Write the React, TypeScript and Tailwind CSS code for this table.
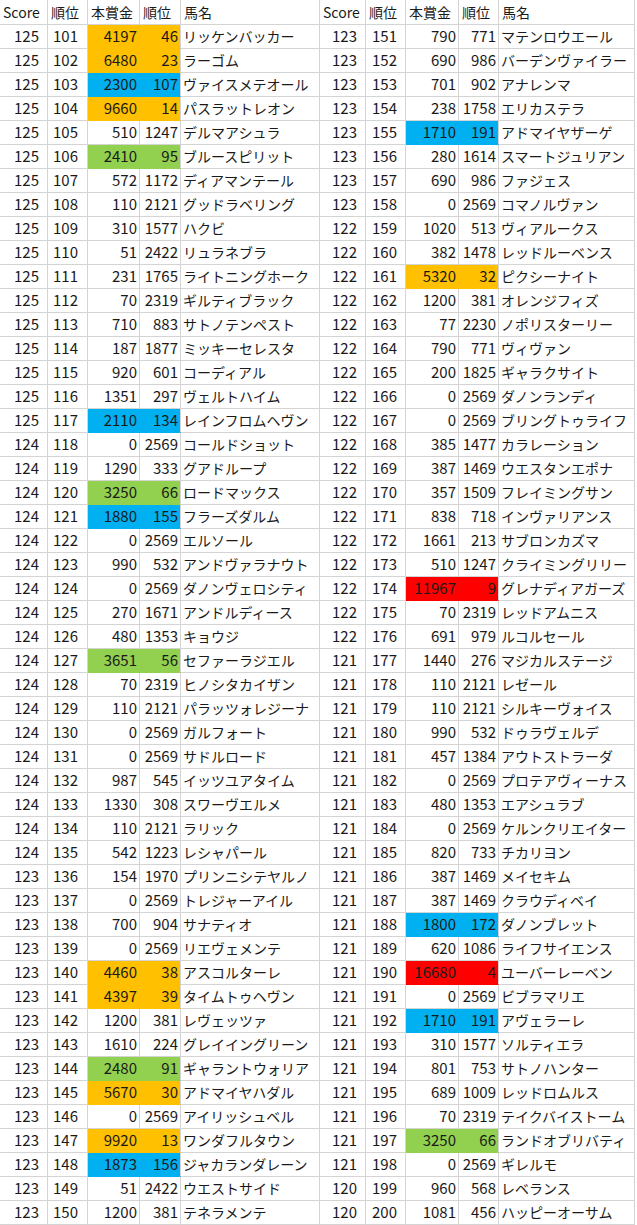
import React from "react";

type Row = [number, number, number, number, string, string?];

const O = "o", B = "b", G = "g", R = "r";

const left: Row[] = [
  [125, 101, 4197, 46, "リッケンバッカー", O],
  [125, 102, 6480, 23, "ラーゴム", O],
  [125, 103, 2300, 107, "ヴァイスメテオール", B],
  [125, 104, 9660, 14, "パスラットレオン", O],
  [125, 105, 510, 1247, "デルマアシュラ"],
  [125, 106, 2410, 95, "ブルースピリット", G],
  [125, 107, 572, 1172, "ディアマンテール"],
  [125, 108, 110, 2121, "グッドラベリング"],
  [125, 109, 310, 1577, "ハクビ"],
  [125, 110, 51, 2422, "リュラネブラ"],
  [125, 111, 231, 1765, "ライトニングホーク"],
  [125, 112, 70, 2319, "ギルティブラック"],
  [125, 113, 710, 883, "サトノテンペスト"],
  [125, 114, 187, 1877, "ミッキーセレスタ"],
  [125, 115, 920, 601, "コーディアル"],
  [125, 116, 1351, 297, "ヴェルトハイム"],
  [125, 117, 2110, 134, "レインフロムヘヴン", B],
  [124, 118, 0, 2569, "コールドショット"],
  [124, 119, 1290, 333, "グアドループ"],
  [124, 120, 3250, 66, "ロードマックス", G],
  [124, 121, 1880, 155, "フラーズダルム", B],
  [124, 122, 0, 2569, "エルソール"],
  [124, 123, 990, 532, "アンドヴァラナウト"],
  [124, 124, 0, 2569, "ダノンヴェロシティ"],
  [124, 125, 270, 1671, "アンドルディース"],
  [124, 126, 480, 1353, "キョウジ"],
  [124, 127, 3651, 56, "セファーラジエル", G],
  [124, 128, 70, 2319, "ヒノシタカイザン"],
  [124, 129, 110, 2121, "パラッツォレジーナ"],
  [124, 130, 0, 2569, "ガルフォート"],
  [124, 131, 0, 2569, "サドルロード"],
  [124, 132, 987, 545, "イッツユアタイム"],
  [124, 133, 1330, 308, "スワーヴエルメ"],
  [124, 134, 110, 2121, "ラリック"],
  [124, 135, 542, 1223, "レシャパール"],
  [123, 136, 154, 1970, "プリンニシテヤルノ"],
  [123, 137, 0, 2569, "トレジャーアイル"],
  [123, 138, 700, 904, "サナティオ"],
  [123, 139, 0, 2569, "リエヴェメンテ"],
  [123, 140, 4460, 38, "アスコルターレ", O],
  [123, 141, 4397, 39, "タイムトゥヘヴン", O],
  [123, 142, 1200, 381, "レヴェッツァ"],
  [123, 143, 1610, 224, "グレイイングリーン"],
  [123, 144, 2480, 91, "ギャラントウォリア", G],
  [123, 145, 5670, 30, "アドマイヤハダル", O],
  [123, 146, 0, 2569, "アイリッシュベル"],
  [123, 147, 9920, 13, "ワンダフルタウン", O],
  [123, 148, 1873, 156, "ジャカランダレーン", B],
  [123, 149, 51, 2422, "ウエストサイド"],
  [123, 150, 1200, 381, "テネラメンテ"],
];

const right: Row[] = [
  [123, 151, 790, 771, "マテンロウエール"],
  [123, 152, 690, 986, "バーデンヴァイラー"],
  [123, 153, 701, 902, "アナレンマ"],
  [123, 154, 238, 1758, "エリカステラ"],
  [123, 155, 1710, 191, "アドマイヤザーゲ", B],
  [123, 156, 280, 1614, "スマートジュリアン"],
  [123, 157, 690, 986, "ファジェス"],
  [123, 158, 0, 2569, "コマノルヴァン"],
  [122, 159, 1020, 513, "ヴィアルークス"],
  [122, 160, 382, 1478, "レッドルーベンス"],
  [122, 161, 5320, 32, "ピクシーナイト", O],
  [122, 162, 1200, 381, "オレンジフィズ"],
  [122, 163, 77, 2230, "ノポリスターリー"],
  [122, 164, 790, 771, "ヴィヴァン"],
  [122, 165, 200, 1825, "ギャラクサイト"],
  [122, 166, 0, 2569, "ダノンランディ"],
  [122, 167, 0, 2569, "ブリングトゥライフ"],
  [122, 168, 385, 1477, "カラレーション"],
  [122, 169, 387, 1469, "ウエスタンエポナ"],
  [122, 170, 357, 1509, "フレイミングサン"],
  [122, 171, 838, 718, "インヴァリアンス"],
  [122, 172, 1661, 213, "サブロンカズマ"],
  [122, 173, 510, 1247, "クライミングリリー"],
  [122, 174, 11967, 9, "グレナディアガーズ", R],
  [122, 175, 70, 2319, "レッドアムニス"],
  [122, 176, 691, 979, "ルコルセール"],
  [121, 177, 1440, 276, "マジカルステージ"],
  [121, 178, 110, 2121, "レゼール"],
  [121, 179, 110, 2121, "シルキーヴォイス"],
  [121, 180, 990, 532, "ドゥラヴェルデ"],
  [121, 181, 457, 1384, "アウトストラーダ"],
  [121, 182, 0, 2569, "プロテアヴィーナス"],
  [121, 183, 480, 1353, "エアシュラブ"],
  [121, 184, 0, 2569, "ケルンクリエイター"],
  [121, 185, 820, 733, "チカリヨン"],
  [121, 186, 387, 1469, "メイセキム"],
  [121, 187, 387, 1469, "クラウディベイ"],
  [121, 188, 1800, 172, "ダノンブレット", B],
  [121, 189, 620, 1086, "ライフサイエンス"],
  [121, 190, 16680, 4, "ユーバーレーベン", R],
  [121, 191, 0, 2569, "ビブラマリエ"],
  [121, 192, 1710, 191, "アヴェラーレ", B],
  [121, 193, 310, 1577, "ソルティエラ"],
  [121, 194, 801, 753, "サトノハンター"],
  [121, 195, 689, 1009, "レッドロムルス"],
  [121, 196, 70, 2319, "テイクバイストーム"],
  [121, 197, 3250, 66, "ランドオブリバティ", G],
  [121, 198, 0, 2569, "ギレルモ"],
  [120, 199, 960, 568, "レベランス"],
  [120, 200, 1081, 456, "ハッピーオーサム"],
];

const fillCls: Record<string, string> = {
  o: "bg-[#ffc000] border-b-[#ffc000]",
  b: "bg-[#00b0f0] border-b-[#00b0f0]",
  g: "bg-[#92d050] border-b-[#92d050]",
  r: "bg-[#ff0000] border-b-[#ff0000]",
};
const fillR: Record<string, string> = {
  o: "border-r-[#ffc000]",
  b: "border-r-[#00b0f0]",
  g: "border-r-[#92d050]",
  r: "border-r-[#ff0000]",
};

const cell = "h-[24px] flex items-center border-r border-b border-[#d4d4d4] whitespace-nowrap overflow-hidden";
const num = "text-[15px] text-[#1a1a1a] justify-end";

function Half({ r, first }: { r: Row; first: boolean }) {
  const [score, rank, prize, prank, name, f] = r;
  const fc = f ? fillCls[f] : "";
  return (
    <>
      <div className={`${cell} ${num} pr-[8px]`}>{score}</div>
      <div className={`${cell} ${num} ${first ? "pr-[9px]" : "pr-[8px]"}`}>{rank}</div>
      <div className={`${cell} ${num} pr-[2px] ${fc} ${f ? fillR[f] : ""}`}>{prize}</div>
      <div className={`${cell} ${num} pr-[2px] ${fc}`}>{prank}</div>
      <div className={`${cell} pl-[2px] text-[#1a1a1a]`}>{name}</div>
    </>
  );
}

const headers = ["Score", "順位", "本賞金", "順位", "馬名"];

export default function App() {
  return (
    <div
      className="w-[637px] h-[1225px] bg-white text-black text-[14px] overflow-hidden"
      style={{ fontFamily: '"Noto Sans CJK JP", "Noto Sans", sans-serif' }}
    >
      <div className="grid grid-cols-[48px_40px_52px_41px_139px_46px_40px_53px_40px_136px]">
        {[...headers, ...headers].map((h, i) => (
          <div key={i} className={`${cell} pl-[3px] h-[25px] text-[14px] text-[#1a1a1a]`}>{h}</div>
        ))}
        {left.map((lr, i) => (
          <React.Fragment key={i}>
            <Half r={lr} first={true} />
            <Half r={right[i]} first={false} />
          </React.Fragment>
        ))}
      </div>
    </div>
  );
}
